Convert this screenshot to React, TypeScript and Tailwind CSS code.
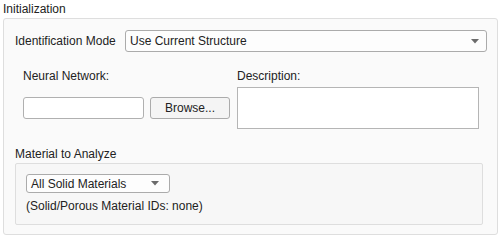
import React from "react";

function Caret() {
  return (
    <svg width="8" height="5" viewBox="0 0 8 5" className="shrink-0">
      <path d="M0 0 L8 0 L4 4.5 Z" fill="#6b6b6b" />
    </svg>
  );
}

export default function App() {
  return (
    <div
      className="w-[503px] h-[240px] bg-white text-[12px] leading-[14px] text-[#222]"
      style={{ fontFamily: '"Liberation Sans", Arial, sans-serif' }}
    >
      <div className="pl-[3px] pt-[2px] h-[18px]">Initialization</div>

      <div className="ml-[3px] mr-[5px] h-[217px] rounded-[3px] border border-[#dedede] bg-[#fafafa]">
        {/* identification mode */}
        <div className="mt-[11px] pl-[11px] pr-[10px] flex items-center h-[22px]">
          <span className="w-[110px] shrink-0">Identification Mode</span>
          <div className="flex-1 h-[22px] flex items-center justify-between rounded-[3px] border border-[#ababab] bg-[#fdfdfd] pl-[4px] pr-[7px]">
            <span>Use Current Structure</span>
            <Caret />
          </div>
        </div>

        {/* network + description */}
        <div className="flex mt-[17px]">
          <div className="pl-[19px] w-[233px] shrink-0">
            <div>Neural Network:</div>
            <div className="mt-[14px] flex gap-[6px]">
              <div className="w-[121px] h-[22px] rounded-[3px] border border-[#b0b0b0] bg-white" />
              <div className="w-[80px] h-[22px] rounded-[3px] border border-[#ababab] bg-[#f4f4f4] flex items-center justify-center">
                Browse...
              </div>
            </div>
          </div>
          <div>
            <div>Description:</div>
            <div className="mt-[4px] w-[242px] h-[42px] border border-[#b5b5b5] bg-white" />
          </div>
        </div>

        {/* material */}
        <div className="mt-[18px] pl-[11px]">Material to Analyze</div>
        <div className="mt-[2px] ml-[11px] w-[468px] h-[62px] rounded-[2px] border border-[#dedede] bg-[#f7f7f7] pl-[10px] pt-[10px]">
          <div className="w-[144px] h-[19px] flex items-center justify-between rounded-[3px] border border-[#ababab] bg-[#fdfdfd] pl-[4px] pr-[10px]">
            <span>All Solid Materials</span>
            <Caret />
          </div>
          <div className="mt-[6px]">(Solid/Porous Material IDs: none)</div>
        </div>
      </div>
    </div>
  );
}
